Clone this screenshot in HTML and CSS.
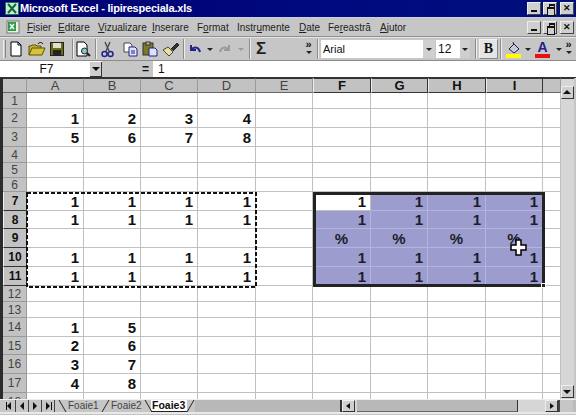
FILE: index.html
```html
<!DOCTYPE html>
<html lang="ro">
<head>
    <meta charset="UTF-8">
    <meta name="viewport" content="width=device-width, initial-scale=1.0">
    <title>Microsoft Excel - lipirespeciala.xls</title>
    <link rel="stylesheet" href="styles.css">
</head>
<body>
<div class="window">

    <!-- title bar -->
    <div class="titlebar">
        <svg class="app-icon" width="14" height="13" viewBox="0 0 14 13">
            <rect width="14" height="13" fill="#0a7a4a"/>
            <rect x="1" y="1" width="12" height="11" fill="#cfe8cf"/>
            <path d="M3 2l8 9M11 2l-8 9" stroke="#0a6a3a" stroke-width="2"/>
        </svg>
        <span class="title-text">Microsoft Excel - lipirespeciala.xls</span>
        <div class="win-btns">
            <span class="win-btn"><i class="ic-min"></i></span>
            <span class="win-btn"><i class="ic-rest"></i></span>
            <span class="win-btn close">&#10005;</span>
        </div>
    </div>

    <!-- menu -->
    <div class="menubar">
        <svg class="doc-icon" width="14" height="14" viewBox="0 0 14 14">
            <rect x="1" y="1" width="12" height="12" fill="#e8f4e0" stroke="#777"/>
            <rect x="2" y="2" width="8" height="9" fill="#2f9a4f"/>
            <path d="M4 4l4 5M8 4l-4 5" stroke="#fff" stroke-width="1.4"/>
        </svg>
        <span class="menu m1"><u>F</u>isier</span>
        <span class="menu m2"><u>E</u>ditare</span>
        <span class="menu m3"><u>V</u>izualizare</span>
        <span class="menu m4"><u>I</u>nserare</span>
        <span class="menu m5">F<u>o</u>rmat</span>
        <span class="menu m6">Instr<u>u</u>mente</span>
        <span class="menu m7"><u>D</u>ate</span>
        <span class="menu m8">Fe<u>r</u>eastră</span>
        <span class="menu m9"><u>A</u>jutor</span>
        <div class="win-btns small">
            <span class="win-btn"><i class="ic-min"></i></span>
            <span class="win-btn"><i class="ic-rest"></i></span>
            <span class="win-btn close">&#10005;</span>
        </div>
    </div>

    <!-- toolbar -->
    <div class="toolbar">
        <span class="grip"></span>
        <span class="tb"><svg width="14" height="16" viewBox="0 0 14 16"><path d="M2 1h7l3 3v11H2z" fill="#fff" stroke="#000"/><path d="M9 1v3h3" fill="none" stroke="#000"/></svg></span>
        <span class="tb ml1"><svg width="18" height="14" viewBox="0 0 18 14"><path d="M1 13V4h2l1-1h4l1 1h4v2" fill="#c9b03a" stroke="#5c5200"/><path d="M1 13l3-7h13l-3 7z" fill="#d8c23a" stroke="#5c5200"/><path d="M10 2c1-2 4-2 5 0" fill="none" stroke="#000"/></svg></span>
        <span class="tb"><svg width="14" height="14" viewBox="0 0 14 14"><rect x="0.500" y="0.500" width="13" height="13" fill="#6c6c18" stroke="#222"/><rect x="3" y="1" width="8" height="5" fill="#e0e0d0"/><rect x="3" y="8" width="8" height="5" fill="#222"/></svg></span>
        <span class="sep s1"></span>
        <span class="tb narrow"><svg width="16" height="17" viewBox="0 0 16 17"><path d="M2 1h7l3 3v11H2z" fill="#fff" stroke="#000"/><circle cx="9.500" cy="10" r="3" fill="#8cc8c8" stroke="#222"/><path d="M12 12l3 3" stroke="#222" stroke-width="2"/></svg></span>
        <span class="sep s2"></span>
        <span class="tb"><svg width="13" height="17" viewBox="0 0 13 17"><path d="M4 1l4 9M9 1l-4 9" stroke="#444" stroke-width="1.300"/><circle cx="3.500" cy="13" r="2.500" fill="none" stroke="#22228c" stroke-width="1.500"/><circle cx="9.500" cy="13" r="2.500" fill="none" stroke="#22228c" stroke-width="1.500"/></svg></span>
        <span class="tb ml3"><svg width="15" height="15" viewBox="0 0 15 15"><path d="M1 1h6l2 2v7H1z" fill="#fff" stroke="#444"/><path d="M6 5h6l2 2v7H6z" fill="#dfe3f5" stroke="#22228c"/><path d="M8 9h4M8 11h4" stroke="#22228c"/></svg></span>
        <span class="tb"><svg width="16" height="16" viewBox="0 0 16 16"><rect x="1" y="2" width="10" height="12" fill="#7a7a20" stroke="#333"/><rect x="4" y="1" width="4" height="3" fill="#bbb" stroke="#333"/><path d="M7 7h6l2 2v6H7z" fill="#dfe3f5" stroke="#22228c"/></svg></span>
        <span class="tb ml1"><svg width="18" height="16" viewBox="0 0 18 16"><path d="M6 6l5 5-4 4-6-6z" fill="#e8e0a0" stroke="#444"/><path d="M9 8l6-6 2 2-6 6" fill="#333" stroke="#222"/></svg></span>
        <span class="sep s3"></span>
        <span class="tb"><svg width="14" height="12" viewBox="0 0 14 12"><path d="M3 2v5h5M3 7c3-4 8-3 9 2" fill="none" stroke="#22228c" stroke-width="2"/></svg></span>
        <span class="dd dd1"></span>
        <span class="tb ml2"><svg width="14" height="12" viewBox="0 0 14 12"><path d="M11 2v5H6M11 7C8 3 3 4 2 9" fill="none" stroke="#9a9a9a" stroke-width="2"/></svg></span>
        <span class="dd pale dd2"></span>
        <span class="sep s4"></span>
        <span class="tb sigma">&#931;</span>
        <span class="chev c1">&raquo;</span>
        <span class="sep s5"></span>
        <span class="combo font-box">Arial</span><span class="combo-arrow"></span>
        <span class="combo size-box">12</span><span class="combo-arrow"></span>
        <span class="sep s6"></span>
        <span class="bold-btn">B</span>
        <span class="sep s7"></span>
        <svg class="t-fill" width="16" height="17" viewBox="0 0 16 17"><path d="M3 8l5-5 5 5-5 4z" fill="#c8c8e8" stroke="#222"/><path d="M7 1l1 3" stroke="#222"/><rect x="0" y="13" width="15" height="4" fill="#ffff00"/></svg>
        <span class="dd dd3"></span>
        <span class="t-color"><b>A</b><i></i></span>
        <span class="dd dd4"></span>
        <span class="chev c2">&raquo;</span>
    </div>

    <!-- formula bar -->
    <div class="formulabar">
        <span class="namebox">F7</span>
        <span class="name-arrow"></span>
        <span class="eq">=</span>
        <span class="formula">1</span>
    </div>

    <!-- sheet -->
    <div class="sheet">
        <div class="grid-wrap">
            <table class="grid">
                <colgroup>
                    <col class="w-rh"><col class="w57"><col class="w57"><col class="w57"><col class="w58"><col class="w57"><col class="w58"><col class="w57"><col class="w58"><col class="w57"><col class="w18">
                </colgroup>
                <tr class="head"><th></th><th>A</th><th>B</th><th>C</th><th>D</th><th>E</th><th class="on">F</th><th class="on">G</th><th class="on">H</th><th class="on">I</th><th></th></tr>
                <tr class="h16"><th>1</th><td></td><td></td><td></td><td></td><td></td><td></td><td></td><td></td><td></td><td></td></tr>
                <tr><th>2</th><td>1</td><td>2</td><td>3</td><td>4</td><td></td><td></td><td></td><td></td><td></td><td></td></tr>
                <tr><th>3</th><td>5</td><td>6</td><td>7</td><td>8</td><td></td><td></td><td></td><td></td><td></td><td></td></tr>
                <tr class="h16"><th>4</th><td></td><td></td><td></td><td></td><td></td><td></td><td></td><td></td><td></td><td></td></tr>
                <tr class="h15"><th>5</th><td></td><td></td><td></td><td></td><td></td><td></td><td></td><td></td><td></td><td></td></tr>
                <tr class="h14"><th>6</th><td></td><td></td><td></td><td></td><td></td><td></td><td></td><td></td><td></td><td></td></tr>
                <tr><th class="on">7</th><td>1</td><td>1</td><td>1</td><td>1</td><td></td><td>1</td><td class="sel">1</td><td class="sel">1</td><td class="sel">1</td><td></td></tr>
                <tr class="h18"><th class="on">8</th><td>1</td><td>1</td><td>1</td><td>1</td><td></td><td class="sel">1</td><td class="sel">1</td><td class="sel">1</td><td class="sel">1</td><td></td></tr>
                <tr><th class="on">9</th><td></td><td></td><td></td><td></td><td></td><td class="sel mid">%</td><td class="sel mid">%</td><td class="sel mid">%</td><td class="sel mid">%</td><td></td></tr>
                <tr><th class="on">10</th><td>1</td><td>1</td><td>1</td><td>1</td><td></td><td class="sel">1</td><td class="sel">1</td><td class="sel">1</td><td class="sel">1</td><td></td></tr>
                <tr><th class="on">11</th><td>1</td><td>1</td><td>1</td><td>1</td><td></td><td class="sel">1</td><td class="sel">1</td><td class="sel">1</td><td class="sel">1</td><td></td></tr>
                <tr class="h16"><th>12</th><td></td><td></td><td></td><td></td><td></td><td></td><td></td><td></td><td></td><td></td></tr>
                <tr class="h16"><th>13</th><td></td><td></td><td></td><td></td><td></td><td></td><td></td><td></td><td></td><td></td></tr>
                <tr><th>14</th><td>1</td><td>5</td><td></td><td></td><td></td><td></td><td></td><td></td><td></td><td></td></tr>
                <tr class="h18"><th>15</th><td>2</td><td>6</td><td></td><td></td><td></td><td></td><td></td><td></td><td></td><td></td></tr>
                <tr><th>16</th><td>3</td><td>7</td><td></td><td></td><td></td><td></td><td></td><td></td><td></td><td></td></tr>
                <tr><th>17</th><td>4</td><td>8</td><td></td><td></td><td></td><td></td><td></td><td></td><td></td><td></td></tr>
                <tr><th>18</th><td></td><td></td><td></td><td></td><td></td><td></td><td></td><td></td><td></td><td></td></tr>
            </table>
            <svg class="ants" width="232" height="97" viewBox="0 0 232 97"><rect x="1" y="1" width="229" height="94" fill="none" stroke="#111" stroke-width="2" stroke-dasharray="4 2"/></svg>
            <div class="selection"><span class="handle"></span></div>
            <svg class="cursor" width="17" height="17" viewBox="0 0 17 17"><path d="M6 1h5v5h5v5h-5v5H6v-5H1V6h5z" fill="#fff" stroke="#000" stroke-width="1.500"/></svg>
        </div>
        <div class="vscroll">
            <span class="sbtn up"></span>
            <span class="vtrack"></span>
            <span class="sbtn down"></span>
        </div>
    </div>

    <!-- sheet tabs -->
    <div class="tabbar">
        <div class="tabnav">
            <span class="nav first"></span>
            <span class="nav prev"></span>
            <span class="nav next"></span>
            <span class="nav last"></span>
        </div>
        <div class="tabs">
            <span class="tab t1">Foaie1</span>
            <span class="tab t2">Foaie2</span>
            <span class="tab active">Foaie3</span>
        </div>
        <span class="tab-fill"></span>
        <div class="hscroll">
            <span class="sbtn left"></span>
            <span class="hthumb"></span>
            <span class="htrack"></span>
            <span class="sbtn right"></span>
        </div>
        <span class="corner"></span>
    </div>
    <div class="statusline"></div>
</div>
</body>
</html>
```

FILE: styles.css
```css
* {
    box-sizing: border-box;
}
body {
    margin: 0;
    background: #c4c4c4;
    font-family: "Liberation Sans", Arial, sans-serif;
    color: #111;
}
.window {
    width: 576px;
    height: 415px;
    overflow: hidden;
    display: flex;
    flex-direction: column;
}

/* title bar */
.titlebar {
    height: 18px;
    flex: none;
    display: flex;
    align-items: center;
    padding: 0 2px 1px 5px;
    background: linear-gradient(90deg, #000070, #000a80 60%, #00107c);
    border-bottom: 1px solid #c8d0e0;
}
.title-text {
    margin-left: 1px;
    color: #fff;
    font-size: 11px;
    font-weight: bold;
    letter-spacing: -0.2px;
}
.win-btns {
    margin-left: auto;
    display: flex;
    gap: 2px;
}
.win-btn {
    width: 14px;
    height: 13px;
    position: relative;
    background: #cfcfcf;
    border: 1px solid #eee;
    border-right-color: #444;
    border-bottom-color: #444;
    font-size: 9px;
    font-weight: bold;
    line-height: 11px;
    text-align: center;
    color: #111;
}
.win-btn.close {
    margin-left: 1px;
}
.win-btn i {
    position: absolute;
    display: block;
}
.ic-min {
    left: 3px;
    bottom: 2px;
    width: 6px;
    height: 2px;
    background: #111;
}
.ic-rest {
    left: 5px;
    top: 1px;
    width: 6px;
    height: 6px;
    border: 1px solid #111;
    border-top-width: 2px;
}
.ic-rest::after {
    content: "";
    position: absolute;
    left: -3px;
    top: 1px;
    width: 6px;
    height: 6px;
    background: #cfcfcf;
    border: 1px solid #111;
    border-top-width: 2px;
}

/* menu */
.menubar {
    height: 19px;
    flex: none;
    display: flex;
    align-items: center;
    padding: 0 2px 0 6px;
    font-size: 10px;
    color: #222;
    background: #c6c6c6;
    border-bottom: 1px solid #909090;
}
.doc-icon {
    flex: none;
    margin-right: 7px;
}
.menu {
    flex: none;
    white-space: nowrap;
}
.m1 { width: 31px; }
.m2 { width: 40px; }
.m3 { width: 54px; }
.m4 { width: 45px; }
.m5 { width: 40px; }
.m6 { width: 62px; }
.m7 { width: 29px; }
.m8 { width: 52px; }
.m9 { width: 30px; }

/* toolbar */
.toolbar {
    height: 24px;
    flex: none;
    display: flex;
    align-items: center;
    padding-left: 3px;
    background: #c6c6c6;
    border-top: 1px solid #e4e4e4;
    border-bottom: 1px solid #8c8c8c;
}
.grip {
    flex: none;
    width: 3px;
    height: 18px;
    border-left: 1px solid #eee;
    border-right: 1px solid #888;
}
.tb {
    flex: none;
    width: 20px;
    height: 20px;
    display: flex;
    align-items: center;
    justify-content: center;
}
.tb.narrow { width: 18px; }
.ml1 { margin-left: 1px; }
.ml2 { margin-left: 2px; }
.ml3 { margin-left: 3px; }
.sep {
    flex: none;
    width: 2px;
    height: 20px;
    border-left: 1px solid #8c8c8c;
    border-right: 1px solid #eee;
}
.s1 { margin-left: 5px; }
.s2 { margin-left: 3px; }
.s3 { margin-left: 2px; }
.s4 { margin-left: 5px; }
.s5 { margin-left: 4px; }
.s6 { margin-left: 5px; }
.s7 { margin-left: 2px; }
.dd {
    flex: none;
    width: 6px;
    height: 0;
    border-left: 3px solid transparent;
    border-right: 3px solid transparent;
    border-top: 3px solid #222;
}
.dd.pale {
    border-top-color: #999;
}
.dd1 { margin-left: 2px; }
.dd2 { margin-left: 3px; }
.dd3 { margin-left: 3px; }
.dd4 { margin-left: 6px; }
.sigma {
    font-size: 17px;
    font-weight: bold;
    color: #222;
}
.chev {
    flex: none;
    position: relative;
    width: 9px;
    height: 18px;
    font-size: 11px;
    line-height: 9px;
    font-weight: bold;
    text-align: center;
}
.chev::after {
    content: "";
    position: absolute;
    left: 2px;
    top: 11px;
    border-left: 3px solid transparent;
    border-right: 3px solid transparent;
    border-top: 3px solid #222;
}
.c1 { margin-left: 33px; }
.c2 { margin-left: 2px; }
.combo {
    flex: none;
    height: 18px;
    background: #fff;
    font-size: 11px;
    line-height: 18px;
    padding-left: 2px;
}
.font-box {
    width: 102px;
    margin-left: 2px;
}
.size-box {
    width: 24px;
    font-size: 12px;
    margin-left: 1px;
}
.combo-arrow {
    flex: none;
    position: relative;
    width: 12px;
    height: 18px;
    background: #cfcfcf;
}
.combo-arrow::after {
    content: "";
    position: absolute;
    left: 3px;
    top: 8px;
    border-left: 3px solid transparent;
    border-right: 3px solid transparent;
    border-top: 3px solid #222;
}
.size-box + .combo-arrow {
    width: 10px;
}
.size-box + .combo-arrow::after {
    left: 2px;
}
.bold-btn {
    flex: none;
    width: 19px;
    height: 20px;
    margin-left: 2px;
    background: #e4e4e4;
    border: 1px solid #f4f4f4;
    border-right-color: #888;
    border-bottom-color: #888;
    font-family: "Liberation Serif", serif;
    font-size: 14px;
    font-weight: bold;
    line-height: 18px;
    text-align: center;
}
.t-fill {
    flex: none;
    margin-left: 4px;
}
.t-color {
    flex: none;
    width: 15px;
    height: 18px;
    margin-left: 4px;
    position: relative;
    text-align: center;
    color: #22228c;
    font-size: 14px;
    line-height: 14px;
}
.t-color i {
    position: absolute;
    left: 0;
    bottom: 0;
    width: 15px;
    height: 4px;
    background: #e81010;
}

/* formula bar */
.formulabar {
    height: 17px;
    flex: none;
    display: flex;
    align-items: center;
    padding-left: 3px;
    background: #fff;
    font-size: 12px;
    border-bottom: 1px solid #333;
}
.namebox {
    width: 87px;
    text-align: center;
}
.name-arrow {
    position: relative;
    width: 12px;
    height: 15px;
    background: #cfcfcf;
    border-right: 1px solid #333;
    border-bottom: 1px solid #333;
}
.name-arrow::after {
    content: "";
    position: absolute;
    left: 2px;
    top: 5px;
    border-left: 4px solid transparent;
    border-right: 4px solid transparent;
    border-top: 4px solid #111;
}
.eq {
    width: 51px;
    height: 16px;
    padding-right: 4px;
    background: #c6c6c6;
    text-align: right;
    font-weight: bold;
    line-height: 16px;
}
.formula {
    padding-left: 5px;
}

/* sheet */
.sheet {
    flex: none;
    display: flex;
    height: 321px;
    background: #fff;
    border-left: 3px solid #2c2c2c;
    border-right: 2px solid #c6c6c6;
}
.grid-wrap {
    position: relative;
    width: 558px;
    height: 321px;
    overflow: hidden;
}
.grid {
    table-layout: fixed;
    width: 558px;
    border-collapse: separate;
    border-spacing: 0;
    font-size: 15px;
}
.w-rh { width: 24px; }
.w57 { width: 57px; }
.w58 { width: 58px; }
.w18 { width: 18px; }
.grid tr { height: 19px; }
.grid tr.h18 { height: 18px; }
.grid tr.h16 { height: 16px; }
.grid tr.h15 { height: 15px; }
.grid tr.h14 { height: 14px; }
.grid tr.head { height: 15px; }
.grid th {
    padding: 0;
    background: #c2c2c2;
    border-right: 1px solid #9a9a9a;
    border-bottom: 1px solid #9a9a9a;
    font-size: 12px;
    line-height: 12px;
    font-weight: normal;
    color: #444;
    text-align: center;
}
.grid tr.head th {
    border-top: 1px solid #333;
    font-size: 13px;
    line-height: 13px;
    border-bottom-color: #666;
}
.grid th.on,
.grid tr.head th.on {
    font-weight: bold;
    color: #111;
    border-right-color: #333;
    border-bottom-color: #333;
    border-left: 1px solid #eee;
}
.grid td {
    padding: 0 4px 0 0;
    border-right: 1px solid #c0c0c0;
    border-bottom: 1px solid #c0c0c0;
    background: #fff;
    font-weight: bold;
    text-align: right;
    line-height: 13px;
    vertical-align: middle;
}
.grid td.sel {
    background: #9c9cce;
    border-color: #b4b4dc;
    color: #1c1c2c;
}
.grid td.mid {
    padding-right: 0;
    text-align: center;
}
.ants {
    position: absolute;
    left: 23px;
    top: 114px;
}
.selection {
    position: absolute;
    left: 310px;
    top: 114px;
    width: 232px;
    height: 95px;
    border: 3px solid #222;
}
.handle {
    position: absolute;
    right: -4px;
    bottom: -4px;
    width: 5px;
    height: 5px;
    background: #222;
    border: 1px solid #fff;
}
.cursor {
    position: absolute;
    left: 507px;
    top: 161px;
}

/* scroll bars */
.vscroll {
    flex: none;
    width: 13px;
    display: flex;
    flex-direction: column;
    background: #d6d6d6;
    border-top: 1px solid #333;
    padding-top: 7px;
}
.sbtn {
    flex: none;
    position: relative;
    display: block;
    background: #cfcfcf;
    border: 1px solid #eee;
    border-right-color: #333;
    border-bottom-color: #333;
}
.sbtn::after {
    content: "";
    position: absolute;
    border-style: solid;
    border-color: transparent;
}
.up, .down {
    height: 13px;
}
.up::after {
    left: 1px;
    top: 3px;
    border-width: 0 4px 4px;
    border-bottom-color: #111;
}
.down::after {
    left: 1px;
    top: 4px;
    border-width: 4px 4px 0;
    border-top-color: #111;
}
.vtrack {
    flex: 1;
}
.down {
    margin-bottom: 1px;
}
.tabbar {
    flex: none;
    height: 13px;
    display: flex;
    background: #bcbcbc;
    font-size: 10px;
    border-top: 1px solid #eee;
}
.tabnav {
    flex: none;
    display: flex;
    width: 58px;
    padding-left: 3px;
    background: #c6c6c6;
}
.nav {
    flex: none;
    position: relative;
    width: 13px;
    height: 12px;
    border-right: 1px solid #444;
}
.nav::after {
    content: "";
    position: absolute;
    top: 2px;
    border-style: solid;
    border-color: transparent;
    border-width: 4px 0;
}
.first::after, .prev::after {
    left: 4px;
    border-right: 4px solid #111;
}
.next::after, .last::after {
    left: 4px;
    border-left: 4px solid #111;
}
.first::before, .last::before {
    content: "";
    position: absolute;
    top: 2px;
    width: 1px;
    height: 8px;
    background: #111;
}
.first::before { left: 3px; }
.last::before { left: 9px; }
.tabs {
    flex: none;
    display: flex;
    width: 137px;
    background: #c6c6c6;
    padding-left: 10px;
}
.tab {
    flex: none;
    position: relative;
    height: 12px;
    line-height: 11px;
    color: #444;
}
.tab::before {
    content: "";
    position: absolute;
    left: -6px;
    top: 0;
    width: 1px;
    height: 12px;
    background: #222;
}
.t1 { width: 43px; }
.t2 { width: 40px; }
.t1::before { transform: skewX(30deg); }
.t2::before { transform: skewX(-30deg); }
.tab.active {
    width: 36px;
    padding-left: 1px;
    background: #fff;
    color: #111;
    font-size: 10.5px;
    font-weight: bold;
    border-bottom: 1px solid #222;
}
.tab.active::before {
    left: -3px;
    transform: skewX(30deg);
}
.tab.active::after {
    content: "";
    position: absolute;
    right: -4px;
    top: 0;
    width: 1px;
    height: 12px;
    background: #222;
    transform: skewX(-30deg);
}
.tab-fill {
    flex: none;
    width: 147px;
    background: #b8b8b8;
    border-right: 2px solid #333;
}
.hscroll {
    flex: none;
    width: 216px;
    display: flex;
    background: #d6d6d6;
}
.left, .right {
    width: 13px;
    height: 12px;
}
.left::after {
    left: 3px;
    top: 2px;
    border-width: 3px 4px 3px 0;
    border-right-color: #111;
}
.right::after {
    left: 4px;
    top: 2px;
    border-width: 3px 0 3px 4px;
    border-left-color: #111;
}
.hthumb {
    flex: none;
    width: 161px;
    margin-left: 2px;
    height: 12px;
    background: #b8b8b8;
    border-right: 1px solid #333;
    border-bottom: 1px solid #666;
}
.htrack {
    flex: 1;
}
.corner {
    flex: none;
    width: 15px;
    background: #c6c6c6;
    border-left: 2px solid #444;
}
.statusline {
    flex: none;
    height: 2px;
    background: #e8e8e8;
}
```
